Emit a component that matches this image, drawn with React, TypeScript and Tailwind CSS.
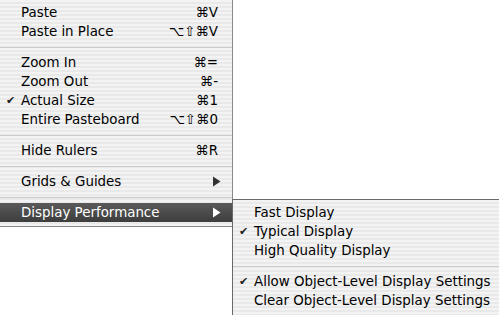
import React from "react";

type Item =
  | { sep: true }
  | { sep?: false; label: string; shortcut?: string; checked?: boolean; submenu?: boolean; active?: boolean };

const mainItems: Item[] = [
  { label: "Paste", shortcut: "⌘V" },
  { label: "Paste in Place", shortcut: "⌥⇧⌘V" },
  { sep: true },
  { label: "Zoom In", shortcut: "⌘=" },
  { label: "Zoom Out", shortcut: "⌘-" },
  { label: "Actual Size", shortcut: "⌘1", checked: true },
  { label: "Entire Pasteboard", shortcut: "⌥⇧⌘0" },
  { sep: true },
  { label: "Hide Rulers", shortcut: "⌘R" },
  { sep: true },
  { label: "Grids & Guides", submenu: true },
  { sep: true },
  { label: "Display Performance", submenu: true, active: true },
];

const subItems: Item[] = [
  { label: "Fast Display" },
  { label: "Typical Display", checked: true },
  { label: "High Quality Display" },
  { sep: true },
  { label: "Allow Object-Level Display Settings", checked: true },
  { label: "Clear Object-Level Display Settings" },
];

function Arrow({ white }: { white?: boolean }) {
  return (
    <svg width="8" height="11" viewBox="0 0 8 11" className="block">
      <polygon points="0,0.5 7.5,5.5 0,10.5" fill={white ? "#ffffff" : "#333333"} />
    </svg>
  );
}

function MenuRows({ items }: { items: Item[] }) {
  return (
    <>
      {items.map((it, i) => {
        if (it.sep) {
          return (
            <div key={i} className="h-[12px] flex items-center">
              <div className="h-px w-full bg-[#cbcbcb]" />
            </div>
          );
        }
        return (
          <div
            key={i}
            className={
              it.active
                ? "relative flex items-center h-[19px] pl-[21px] pr-[11px] text-white bg-[linear-gradient(to_bottom,#5a5a5a,#3d3d3d)]"
                : it.submenu
                ? "relative flex items-center h-[19px] pl-[21px] pr-[11px] text-black"
                : "relative flex items-center h-[19px] pl-[21px] pr-[14px] text-black"
            }
          >
            {it.checked && (
              <span className="absolute left-[6px] top-0 h-[19px] flex items-center text-[11px] text-[#222]">✔</span>
            )}
            <span className="whitespace-nowrap">{it.label}</span>
            {it.shortcut && <span className="ml-auto whitespace-nowrap">{it.shortcut}</span>}
            {it.submenu && (
              <span className="ml-auto">
                <Arrow white={it.active} />
              </span>
            )}
          </div>
        );
      })}
    </>
  );
}

const stripes =
  "bg-[repeating-linear-gradient(to_bottom,#f3f3f3_0px,#f3f3f3_2px,#e9e9e9_2px,#e9e9e9_4px)]";

export default function App() {
  return (
    <div className="relative w-[499px] h-[315px] bg-white overflow-hidden font-['DejaVu_Sans',sans-serif] text-[13.4px] leading-none">
      <div className={`w-[233px] border-r border-b border-[#8a8a8a] pt-[3px] pb-[4px] ${stripes}`}>
        <MenuRows items={mainItems} />
      </div>
      <div className={`absolute left-[232px] top-[199px] w-[275px] h-[130px] border-t border-l border-[#6a6a6a] pt-[3px] ${stripes}`}>
        <MenuRows items={subItems} />
      </div>
    </div>
  );
}
